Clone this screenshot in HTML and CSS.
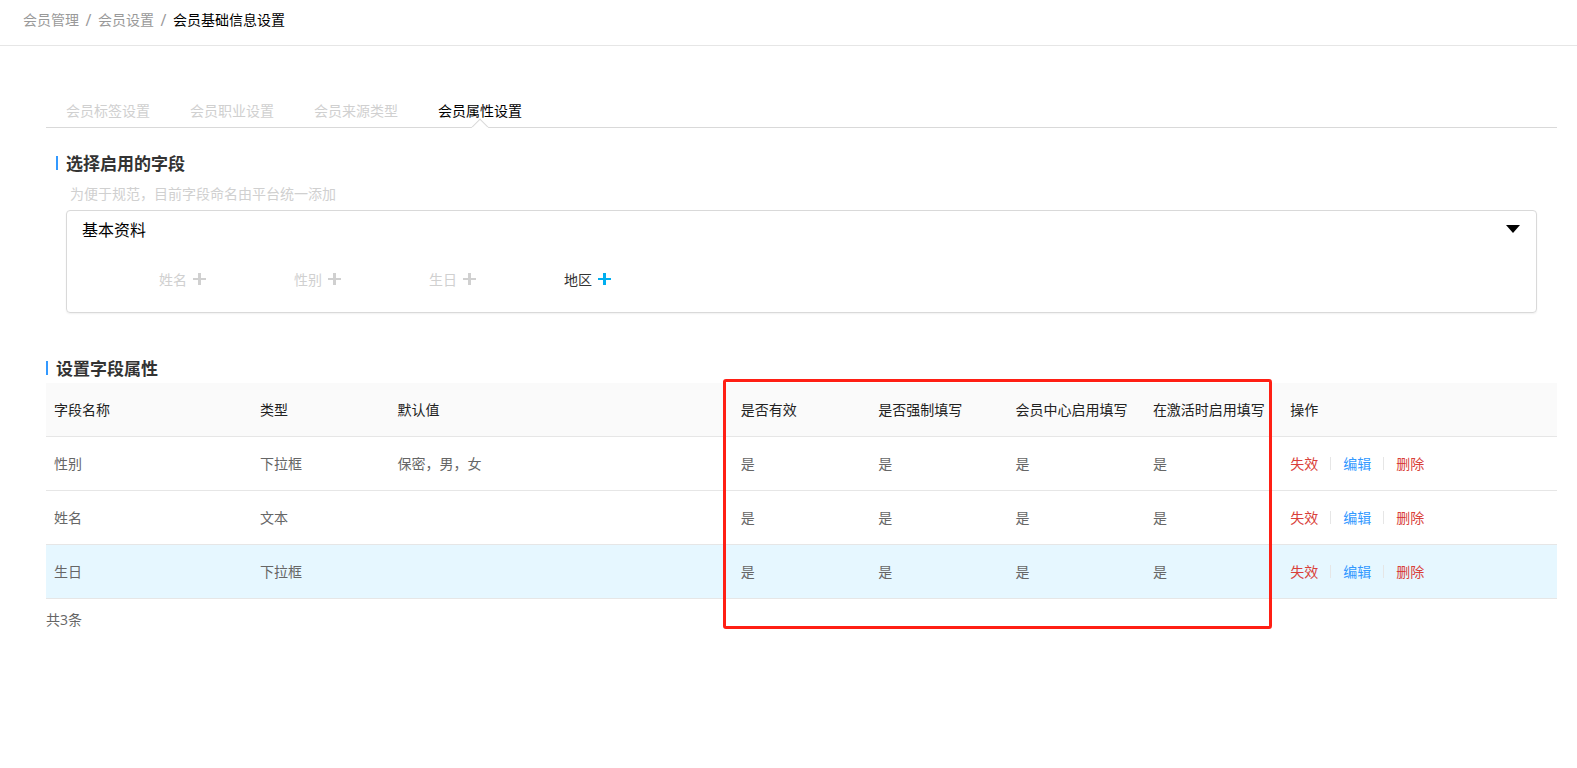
FILE: index.html
```
<!DOCTYPE html>
<html lang="zh-CN">
<head>
    <meta charset="UTF-8">
    <meta name="viewport" content="width=device-width, initial-scale=1.0">
    <title>会员基础信息设置</title>
    <link rel="stylesheet" href="styles.css">
</head>
<body>
    <svg class="sprite" width="0" height="0" aria-hidden="true">
        <symbol id="plus" viewBox="0 0 13 15">
            <path d="M5 0h3v5h5v2H8v5H5V7H0V5h5z" fill="currentColor"></path>
        </symbol>
    </svg>

    <nav class="breadcrumb">
        <a href="#">会员管理</a>
        <span class="slash">/</span>
        <a href="#">会员设置</a>
        <span class="slash">/</span>
        <span class="current">会员基础信息设置</span>
    </nav>

    <main class="content">
        <nav class="tabs">
            <a class="tab" href="#">会员标签设置</a>
            <a class="tab" href="#">会员职业设置</a>
            <a class="tab" href="#">会员来源类型</a>
            <a class="tab active" href="#">会员属性设置</a>
        </nav>

        <section class="fields">
            <h2 class="section-title">选择启用的字段</h2>
            <p class="hint">为便于规范，目前字段命名由平台统一添加</p>
            <div class="panel">
                <div class="panel-header">
                    <h3>基本资料</h3>
                    <button class="toggle" type="button" aria-label="收起">
                        <svg width="14" height="8" viewBox="0 0 14 8"><path d="M0 0h14L7 8z" fill="currentColor"></path></svg>
                    </button>
                </div>
                <div class="field-list">
                    <button class="field" type="button" disabled>姓名<svg class="plus"><use href="#plus"></use></svg></button>
                    <button class="field" type="button" disabled>性别<svg class="plus"><use href="#plus"></use></svg></button>
                    <button class="field" type="button" disabled>生日<svg class="plus"><use href="#plus"></use></svg></button>
                    <button class="field" type="button">地区<svg class="plus"><use href="#plus"></use></svg></button>
                </div>
            </div>
        </section>

        <section class="attributes">
            <h2 class="section-title">设置字段属性</h2>
            <div class="table-wrap">
                <table>
                    <colgroup>
                        <col class="col-name">
                        <col class="col-unit">
                        <col class="col-default">
                        <col class="col-unit">
                        <col class="col-unit">
                        <col class="col-unit">
                        <col class="col-unit">
                        <col>
                    </colgroup>
                    <thead>
                        <tr>
                            <th>字段名称</th>
                            <th>类型</th>
                            <th>默认值</th>
                            <th>是否有效</th>
                            <th>是否强制填写</th>
                            <th>会员中心启用填写</th>
                            <th>在激活时启用填写</th>
                            <th>操作</th>
                        </tr>
                    </thead>
                    <tbody>
                        <tr>
                            <td>性别</td>
                            <td>下拉框</td>
                            <td>保密，男，女</td>
                            <td>是</td>
                            <td>是</td>
                            <td>是</td>
                            <td>是</td>
                            <td>
                                <div class="actions">
                                    <a class="danger" href="#">失效</a>
                                    <a href="#">编辑</a>
                                    <a class="danger" href="#">删除</a>
                                </div>
                            </td>
                        </tr>
                        <tr>
                            <td>姓名</td>
                            <td>文本</td>
                            <td></td>
                            <td>是</td>
                            <td>是</td>
                            <td>是</td>
                            <td>是</td>
                            <td>
                                <div class="actions">
                                    <a class="danger" href="#">失效</a>
                                    <a href="#">编辑</a>
                                    <a class="danger" href="#">删除</a>
                                </div>
                            </td>
                        </tr>
                        <tr class="highlight">
                            <td>生日</td>
                            <td>下拉框</td>
                            <td></td>
                            <td>是</td>
                            <td>是</td>
                            <td>是</td>
                            <td>是</td>
                            <td>
                                <div class="actions">
                                    <a class="danger" href="#">失效</a>
                                    <a href="#">编辑</a>
                                    <a class="danger" href="#">删除</a>
                                </div>
                            </td>
                        </tr>
                    </tbody>
                </table>
                <p class="total">共3条</p>
                <div class="marker"></div>
            </div>
        </section>
    </main>
</body>
</html>
```
FILE: styles.css
```
* {
    margin: 0;
    padding: 0;
    box-sizing: border-box;
}

body {
    font-family: "Open Sans", "Noto Sans CJK SC", sans-serif;
    font-size: 14px;
    font-weight: 400;
    line-height: 20px;
    color: #666;
    background-color: #fff;
}

a {
    text-decoration: none;
}

button {
    font: inherit;
    color: inherit;
    background: none;
    border: none;
    cursor: pointer;
}

.sprite {
    position: absolute;
}

/* breadcrumb */
.breadcrumb {
    display: flex;
    padding: 10px 23px 15px;
    border-bottom: 1px solid #e6e6e6;
    color: #999;
}

.breadcrumb a {
    color: inherit;
}

.breadcrumb .slash {
    width: 19px;
    font-size: 16px;
    text-align: center;
}

.breadcrumb .current {
    color: #000;
}

.content {
    padding: 54px 20px 20px 46px;
}

/* tabs */
.tabs {
    display: flex;
    border-bottom: 1px solid #d9d9d9;
}

.tab {
    position: relative;
    padding: 1px 20px 6px;
    color: #d0d0d0;
}

.tab.active {
    color: #000;
}

.tab.active::after {
    content: "";
    position: absolute;
    left: 50%;
    bottom: -6px;
    width: 10px;
    height: 10px;
    margin-left: -6px;
    background-color: #fff;
    border: 1px solid #d9d9d9;
    border-right-color: transparent;
    border-bottom-color: transparent;
    transform: rotate(45deg);
}

/* sections */
.section-title {
    display: flex;
    align-items: flex-start;
    font-size: 17px;
    font-weight: 700;
    line-height: 24px;
    color: #333;
}

.section-title::before {
    content: "";
    width: 2px;
    height: 14px;
    margin: 4px 8px 0 0;
    background-color: #3399ff;
}

.fields {
    padding: 24px 20px 0 10px;
}

.hint {
    padding: 8px 14px 6px;
    color: #d0d0d0;
}

.panel {
    margin-left: 10px;
    padding: 7px 16px 22px 15px;
    border: 1px solid #d9d9d9;
    border-radius: 4px;
    box-shadow: 0 1px 2px rgba(0, 0, 0, 0.06);
}

.panel-header {
    display: flex;
    justify-content: space-between;
    line-height: 24px;
    color: #000;
}

.panel-header h3 {
    font-size: 16px;
    font-weight: 400;
}

.toggle {
    display: flex;
    align-items: center;
    height: 22px;
}

.field-list {
    display: flex;
    margin-top: 28px;
    padding-left: 77px;
}

.field {
    display: flex;
    align-items: center;
    gap: 6px;
    width: 135px;
    color: #333;
}

.field .plus {
    width: 13px;
    height: 15px;
    color: #00aeef;
}

.field:disabled,
.field:disabled .plus {
    color: #d0d0d0;
    cursor: default;
}

/* attribute table */
.attributes {
    margin-top: 44px;
}

.table-wrap {
    position: relative;
    margin-top: 2px;
}

table {
    width: 100%;
    table-layout: fixed;
    border-collapse: separate;
    border-spacing: 0;
}

.col-name {
    width: calc(100% * 3 / 22);
}

.col-unit {
    width: calc(100% / 11);
}

.col-default {
    width: calc(100% * 5 / 22);
}

th,
td {
    height: 54px;
    padding: 0 8px;
    border-bottom: 1px solid #e6e6e6;
    text-align: left;
    vertical-align: middle;
    white-space: nowrap;
}

th {
    font-weight: 400;
    color: #222;
    background-color: #fafafa;
}

.highlight td {
    background-color: #e6f7ff;
}

.actions {
    display: flex;
    align-items: center;
}

.actions a {
    color: #3399ff;
}

.actions a.danger {
    color: #d9403a;
}

.actions a + a {
    display: flex;
    align-items: center;
}

.actions a + a::before {
    content: "";
    width: 1px;
    height: 13px;
    margin: 0 12px;
    background-color: #e6e6e6;
}

.total {
    padding-top: 11px;
}

/* red frame round the four switch columns */
.marker {
    position: absolute;
    top: -4px;
    bottom: 1px;
    left: calc(100% * 5 / 11 - 10px);
    right: calc(100% * 2 / 11 + 10px);
    border: 3px solid #ff1f14;
    border-radius: 3px;
    pointer-events: none;
}
```
